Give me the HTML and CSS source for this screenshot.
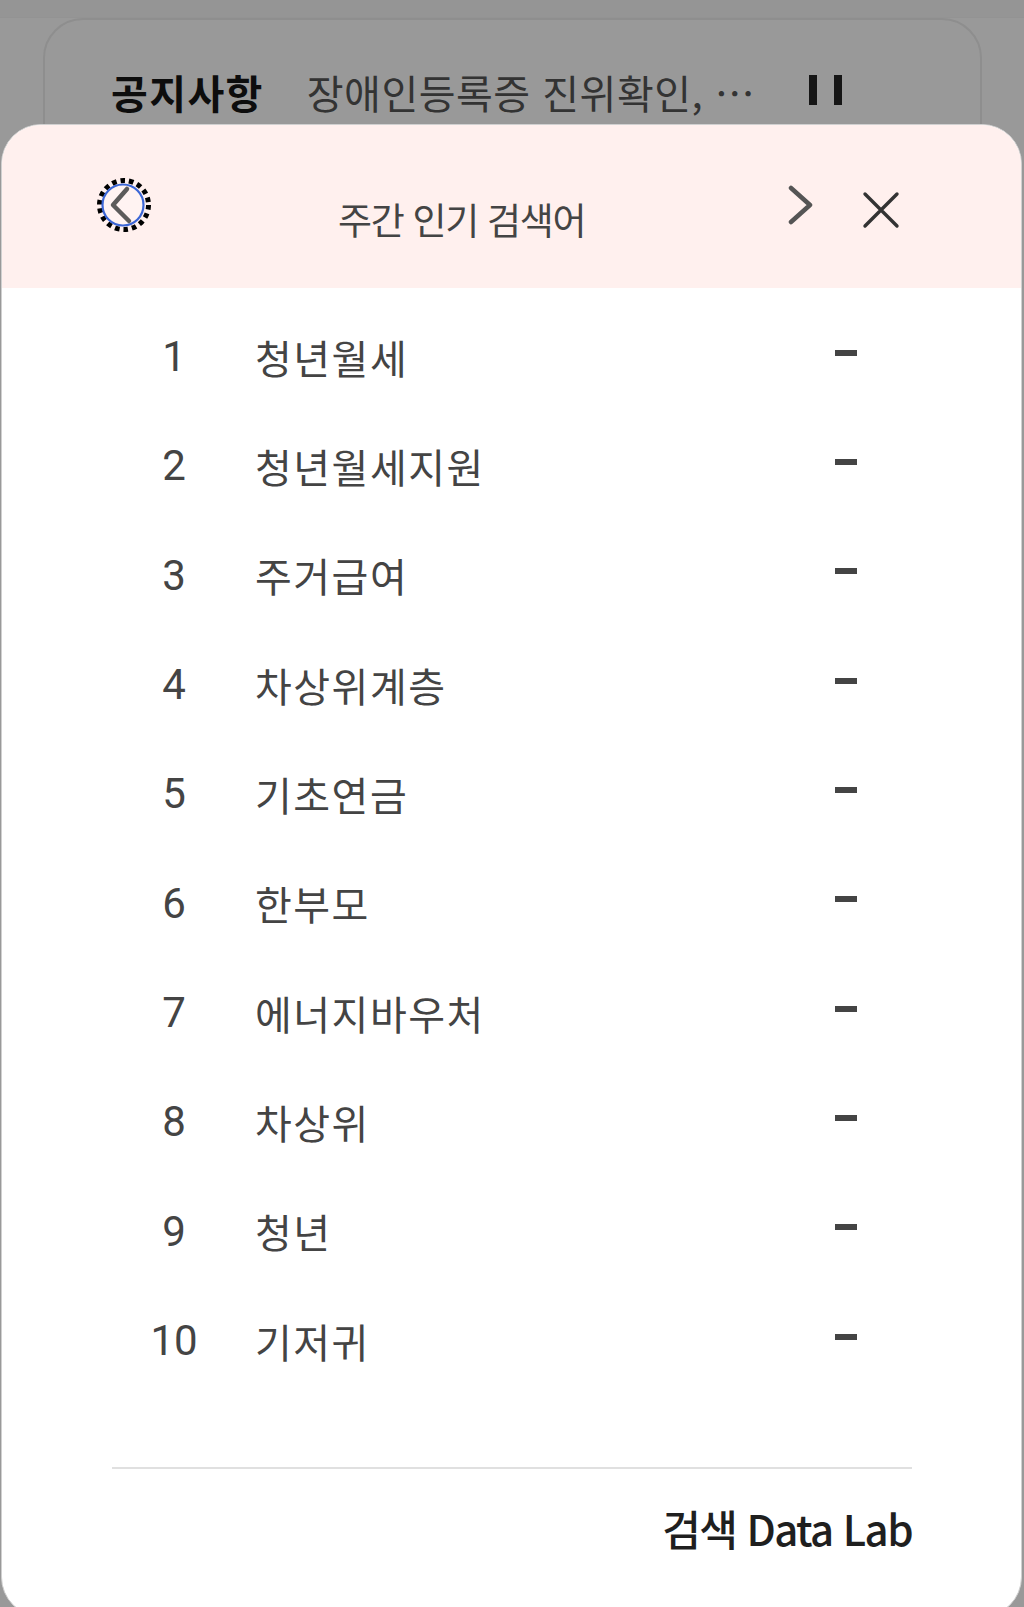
FILE: index.html
```html
<!DOCTYPE html>
<html lang="ko">
<head>
<meta charset="utf-8">
<link rel="stylesheet" href="styles.css">
</head>
<body>
<div class="page">
  <div class="topband"></div>
  <div class="notice">
    <span class="notice-label">공지사항</span>
    <span class="notice-text">장애인등록증 진위확인, …</span>
    <span class="pause"><i></i><i></i></span>
  </div>

  <div class="sheet">
    <div class="sheet-head">
      <svg class="ico-back" width="56" height="56" viewBox="0 0 56 56">
        <circle cx="28" cy="28" r="24.5" fill="none" stroke="#000" stroke-width="5" stroke-dasharray="4.6 3.95"/>
        <circle cx="27" cy="28" r="20.5" fill="#fff3f2" stroke="#3b66d6" stroke-width="2.2"/>
        <path d="M31 12 L17 28 L33 44" fill="none" stroke="#4a4a4a" stroke-width="4.5" stroke-linecap="round" stroke-linejoin="round" opacity="0.9"/>
      </svg>
      <h1 class="title">주간 인기 검색어</h1>
      <svg class="ico-next" width="28" height="40" viewBox="0 0 28 40">
        <path d="M5 3 L24 20 L5 37" fill="none" stroke="#555" stroke-width="4.5" stroke-linecap="round" stroke-linejoin="round"/>
      </svg>
      <svg class="ico-close" width="38" height="38" viewBox="0 0 38 38">
        <path d="M3 3 L35 35 M35 3 L3 35" fill="none" stroke="#333" stroke-width="3.4" stroke-linecap="round"/>
      </svg>
    </div>

    <ol class="rank">
      <li class="row"><span class="num">1</span><span class="kw">청년월세</span><span class="dash"></span></li>
      <li class="row"><span class="num">2</span><span class="kw">청년월세지원</span><span class="dash"></span></li>
      <li class="row"><span class="num">3</span><span class="kw">주거급여</span><span class="dash"></span></li>
      <li class="row"><span class="num">4</span><span class="kw">차상위계층</span><span class="dash"></span></li>
      <li class="row"><span class="num">5</span><span class="kw">기초연금</span><span class="dash"></span></li>
      <li class="row"><span class="num">6</span><span class="kw">한부모</span><span class="dash"></span></li>
      <li class="row"><span class="num">7</span><span class="kw">에너지바우처</span><span class="dash"></span></li>
      <li class="row"><span class="num">8</span><span class="kw">차상위</span><span class="dash"></span></li>
      <li class="row"><span class="num">9</span><span class="kw">청년</span><span class="dash"></span></li>
      <li class="row"><span class="num">10</span><span class="kw">기저귀</span><span class="dash"></span></li>
    </ol>

    <div class="sheet-foot">
      <a class="datalab">검색 Data Lab</a>
    </div>
  </div>
</div>
</body>
</html>
```

FILE: styles.css
```css
* { box-sizing: border-box; }
html, body { margin: 0; padding: 0; }
body {
  width: 1024px;
  height: 1607px;
  overflow: hidden;
  background: #999999;
  font-family: "Noto Sans CJK KR", "Noto Sans", sans-serif;
}
.page {
  position: relative;
  width: 1024px;
  height: 1607px;
}
.topband {
  height: 18px;
  background: #959595;
  border-bottom: 1px solid #939393;
}
.notice {
  margin: 0 42px 0 43px;
  height: 200px;
  border: 2px solid #8e8e8e;
  border-radius: 40px;
  display: flex;
  align-items: flex-start;
  padding: 49px 0 0 66px;
}
.notice-label {
  font-size: 40px;
  line-height: 46px;
  font-weight: 700;
  color: #0d0d0d;
  letter-spacing: 1.4px;
}
.notice-text {
  margin-left: 43px;
  font-size: 40px;
  line-height: 46px;
  color: #333;
  letter-spacing: 0.5px;
}
.pause {
  display: flex;
  gap: 17px;
  margin-left: 54px;
  margin-top: 6px;
}
.pause i {
  display: block;
  width: 8px;
  height: 30px;
  background: #161616;
}

.sheet {
  position: absolute;
  top: 124px;
  left: 1px;
  width: 1021px;
  height: 1493px;
  background: #fff;
  border: 1px solid #d0d0d0;
  border-radius: 40px;
  overflow: hidden;
}
.sheet-head {
  height: 163px;
  background: #fff0ee;
  display: flex;
  align-items: flex-start;
  padding-left: 94px;
}
.ico-back { margin-top: 52px; flex: none; }
.title {
  margin: 74px 0 0 186px;
  font-size: 37px;
  line-height: 40px;
  font-weight: 400;
  color: #444;
  letter-spacing: -1.3px;
  flex: 1;
}
.ico-next { margin-top: 60px; flex: none; }
.ico-close { margin: 66px 121px 0 48px; flex: none; }

.rank {
  list-style: none;
  margin: 0;
  padding: 14px 0 0 0;
}
.row {
  height: 109.33px;
  display: flex;
  align-items: center;
}
.num {
  width: 80px;
  margin-left: 132px;
  text-align: center;
  font-family: Roboto, "Noto Sans", sans-serif;
  font-size: 42px;
  color: #444;
}
.kw {
  margin-left: 41px;
  flex: 1;
  font-size: 40px;
  color: #444;
  letter-spacing: 1.5px;
}
.dash {
  width: 22px;
  height: 6px;
  background: #444;
  margin-right: 164px;
  margin-top: -8px;
}
.sheet-foot {
  margin: 72px 109px 0 110px;
  border-top: 2px solid #e0e0e0;
  display: flex;
  justify-content: flex-end;
  padding-top: 34px;
}
.datalab {
  font-size: 42px;
  line-height: 50px;
  font-weight: 500;
  color: #1f1f1f;
  letter-spacing: -1.6px;
}
```
